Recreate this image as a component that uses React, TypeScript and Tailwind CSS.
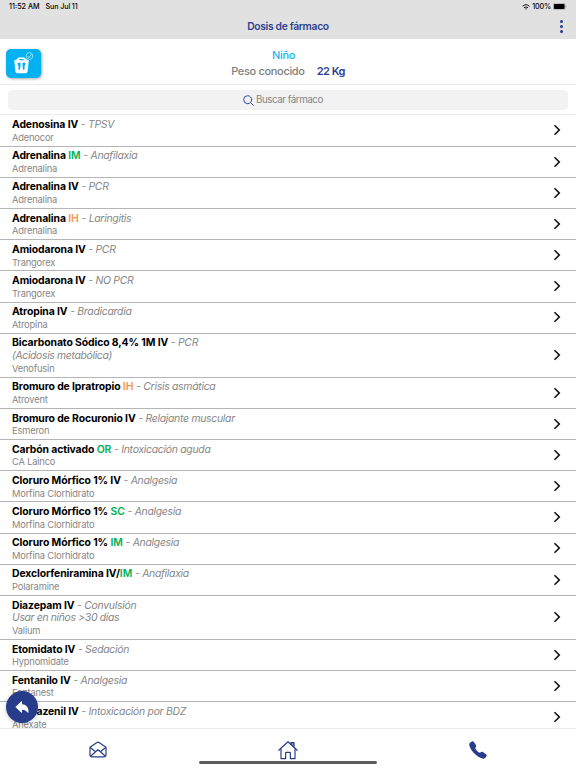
import type { ReactNode } from 'react';
import clsx from 'clsx';
import { IoArrowUndo, IoCall } from 'react-icons/io5';

type Route = 'IM' | 'IH' | 'OR' | 'SC';

interface Drug {
  name: string;
  route?: Route;
  use: string;
  note?: string;
  brand: string;
}

const DRUGS: Drug[] = [
  { name: 'Adenosina IV', use: 'TPSV', brand: 'Adenocor' },
  { name: 'Adrenalina ', route: 'IM', use: 'Anafilaxia', brand: 'Adrenalina' },
  { name: 'Adrenalina IV', use: 'PCR', brand: 'Adrenalina' },
  { name: 'Adrenalina ', route: 'IH', use: 'Laringitis', brand: 'Adrenalina' },
  { name: 'Amiodarona IV', use: 'PCR', brand: 'Trangorex' },
  { name: 'Amiodarona IV', use: 'NO PCR', brand: 'Trangorex' },
  { name: 'Atropina IV', use: 'Bradicardia', brand: 'Atropina' },
  { name: 'Bicarbonato Sódico 8,4% 1M IV', use: 'PCR', note: '(Acidosis metabólica)', brand: 'Venofusin' },
  { name: 'Bromuro de Ipratropio ', route: 'IH', use: 'Crisis asmática', brand: 'Atrovent' },
  { name: 'Bromuro de Rocuronio IV', use: 'Relajante muscular', brand: 'Esmeron' },
  { name: 'Carbón activado ', route: 'OR', use: 'Intoxicación aguda', brand: 'CA Lainco' },
  { name: 'Cloruro Mórfico 1% IV', use: 'Analgesia', brand: 'Morfina Clorhidrato' },
  { name: 'Cloruro Mórfico 1% ', route: 'SC', use: 'Analgesia', brand: 'Morfina Clorhidrato' },
  { name: 'Cloruro Mórfico 1% ', route: 'IM', use: 'Analgesia', brand: 'Morfina Clorhidrato' },
  { name: 'Dexclorfeniramina IV/', route: 'IM', use: 'Anafilaxia', brand: 'Polaramine' },
  { name: 'Diazepam IV', use: 'Convulsión', note: 'Usar en niños >30 días', brand: 'Valium' },
  { name: 'Etomidato IV', use: 'Sedación', brand: 'Hypnomidate' },
  { name: 'Fentanilo IV', use: 'Analgesia', brand: 'Fentanest' },
  { name: 'Flumazenil IV', use: 'Intoxicación por BDZ', brand: 'Anexate' },
];

export default function App() {
  return (
    <div className="relative flex h-[768px] w-[576px] flex-col overflow-hidden bg-white font-['Inter','Liberation_Sans',sans-serif] text-black">
      <Header />
      <PatientBar />
      <SearchBar />
      <ul className="min-h-0 flex-1 pt-[0.6px]">
        {DRUGS.map((drug) => (
          <DrugRow key={`${drug.name}${drug.route}${drug.use}`} drug={drug} />
        ))}
      </ul>
      <TabBar />

      {/* Floating back button */}
      <button
        aria-label="Volver"
        className="absolute top-[691px] left-[6px] flex size-8 items-center justify-center rounded-full bg-[#273c8b] text-white shadow-[0_1px_5px_rgba(0,0,0,0.2)]"
      >
        <IoArrowUndo className="size-[16px]" />
      </button>
    </div>
  );
}

function Header() {
  return (
    <header className="h-[39px] shrink-0 bg-[#e1e1e1]">
      <div className="flex h-[14px] items-center justify-between pr-[9px] pl-[9px] text-[7.2px] font-medium">
        <div className="flex gap-[6px]">
          <span>11:52 AM</span>
          <span className="tracking-[-0.02em]">Sun Jul 11</span>
        </div>
        <div className="flex items-center">
          <WifiIcon />
          <span className="mr-[2px] ml-[2px] tracking-[-0.02em]">100%</span>
          <BatteryIcon />
        </div>
      </div>
      <div className="grid h-[25px] grid-cols-[1fr_auto_1fr] items-center">
        <span />
        <h1 className="text-[10.3px] font-semibold tracking-[-0.032em] text-[#2f4190]">Dosis de fármaco</h1>
        <button aria-label="Menú" className="mr-[13px] flex flex-col gap-[2px] justify-self-end">
          <i className="size-[3px] rounded-full bg-[#273c8b]" />
          <i className="size-[3px] rounded-full bg-[#273c8b]" />
          <i className="size-[3px] rounded-full bg-[#273c8b]" />
        </button>
      </div>
    </header>
  );
}

function PatientBar() {
  return (
    <section className="grid h-[46px] shrink-0 grid-cols-[1fr_auto_1fr] border-b border-[#e9e9e9]">
      <div className="mt-[10px] ml-[6.3px] h-[28.5px] w-[34.3px] rounded-[5px] bg-[#02b1f0] shadow-[1px_1px_3px_rgba(0,0,0,0.35)]">
        <ScaleIcon />
      </div>
      <div className="pt-[8px] text-center text-[11px] leading-[16px] tracking-[-0.03em]">
        <p className="-ml-[9px] font-medium text-[#1ab5f1]">Niño</p>
        <p className="flex gap-[12px] font-medium text-[#808080]">
          <span>Peso conocido</span>
          <span className="font-semibold tracking-[-0.045em] text-[#2f4190]">22 Kg</span>
        </p>
      </div>
    </section>
  );
}

function SearchBar() {
  return (
    <div className="h-[30px] shrink-0 border-b border-[#ececec] px-[8px] pt-[5px]">
      <div className="flex h-5 items-center justify-center gap-[2px] rounded-[4px] bg-[#f2f2f2] pr-[10px] text-[9.8px] tracking-[-0.048em] text-[#858585]">
        <svg viewBox="0 0 11 11" className="size-[11px]" fill="none" stroke="#3a4d9c" strokeLinecap="round">
          <circle cx="4.7" cy="4.7" r="4" />
          <path d="M7.7 7.7 10.3 10.3" />
        </svg>
        <span>Buscar fármaco</span>
      </div>
    </div>
  );
}

function DrugRow({ drug }: { drug: Drug }) {
  const { name, route, use, note, brand } = drug;
  return (
    <li
      className={clsx(
        'flex items-center justify-between border-b border-[#b5b5b5] pr-[15px] pl-[12px]',
        note ? 'h-[44.1px]' : 'h-[31.17px]',
      )}
    >
      <div className="pt-[1.2px] leading-[12.8px] whitespace-pre">
        <p className="text-[10.4px]">
          <b className="font-bold tracking-[-0.01em]">{name}</b>
          {route && <RouteTag route={route}>{route}</RouteTag>}
          <i className="tracking-[-0.026em] text-[#868686]"> - {use}</i>
        </p>
        {note && <p className="text-[10.4px] tracking-[-0.032em] text-[#868686] italic">{note}</p>}
        <p className="text-[9.3px] leading-[11.4px] tracking-[-0.018em] text-[#868686]">{brand}</p>
      </div>
      <svg viewBox="0 0 8 12" className="-mt-[0.6px] h-3 w-2" fill="none" stroke="#111" strokeWidth="1.6">
        <path d="M1.5 1.2 6.3 6 1.5 10.8" />
      </svg>
    </li>
  );
}

function RouteTag({ route, children }: { route: Route; children: ReactNode }) {
  return (
    <span className={clsx('font-semibold', route === 'IH' ? 'text-[#f79646]' : 'text-[#00b050]')}>
      {children}
    </span>
  );
}

function TabBar() {
  return (
    <nav className="relative grid h-10 shrink-0 grid-cols-[195px_1fr_195px] border-t border-[#ececec] bg-white pt-[12px] text-[#273c8b]">
      <svg viewBox="0 0 18 17" className="h-[17px] w-[18px] justify-self-center" fill="none" stroke="currentColor" strokeWidth="1.2" strokeLinejoin="round">
        <path d="M1 6.2 8 1.4Q9 .8 10 1.4L17 6.2V14Q17 15.8 15.2 15.8H2.8Q1 15.8 1 14Z" />
        <path d="M1.2 6.5 6.6 10.8 9 8.8 11.4 10.8 16.8 6.5M1.8 15 6.6 10.8M16.2 15 11.4 10.8" />
      </svg>
      <svg viewBox="0 0 20 19" className="h-[19px] w-[20px] justify-self-center" fill="none" stroke="currentColor" strokeWidth="1.2" strokeLinejoin="round" strokeLinecap="round">
        <path d="M.8 9.2 10 .8 19.2 9.2" />
        <path d="M3 8V17.6H7.6V12Q7.6 11.3 8.3 11.3H11.7Q12.4 11.3 12.4 12V17.6H17V8" />
        <path d="M13 3.2V1.6H16V6" fill="currentColor" fillOpacity=".5" />
      </svg>
      <IoCall className="-mt-px mr-[2px] size-[20px] justify-self-center" />
      <div className="absolute top-[32px] left-[199px] h-[3px] w-[178px] rounded-full bg-[#5c5c5c]" />
    </nav>
  );
}

function WifiIcon() {
  return (
    <svg viewBox="0 0 8 6" className="h-[6px] w-2" fill="none" stroke="#111">
      <path d="M.6 2.3Q4-.9 7.4 2.3M2 3.8Q4 2 6 3.8" />
      <path d="M3.1 4.7 4 5.7 4.9 4.7Q4 4 3.1 4.7" fill="#111" stroke="none" />
    </svg>
  );
}

function BatteryIcon() {
  return (
    <svg viewBox="0 0 15 7" className="h-[7px] w-[14px]" preserveAspectRatio="none">
      <rect x=".3" y=".3" width="12.8" height="6.4" rx="1.8" fill="none" stroke="#8a8a8a" strokeWidth=".6" />
      <rect x="1" y="1" width="11.4" height="5" rx="1.1" />
      <path d="M13.8 2.5Q14.8 3.5 13.8 4.5Z" fill="#8a8a8a" />
    </svg>
  );
}

// Baby scale with footprints and a small check badge
function ScaleIcon() {
  return (
    <svg viewBox="0 0 34.5 28.5" className="h-full w-full">
      <path d="M10.7 11 12.5 8.9H18.5L20.5 11Z" fill="#fff" stroke="#fff" strokeLinejoin="round" />
      <path d="M8.6 11.3H22.6L21.4 22.5Q21.3 24 19.8 24H11.4Q9.9 24 9.8 22.5Z" fill="#fff" stroke="#fff" strokeWidth=".6" strokeLinejoin="round" />
      <rect x="13.4" y="9.9" width="4.3" height="1.4" rx=".5" fill="#02b1f0" />
      <g fill="#02b1f0">
        <path d="M11.4 14.6Q12.8 12.8 14.7 14.2L14.6 17.2 13.9 20.8Q12.4 21.4 12.4 19.5L12.7 17.5Z" />
        <path d="M19.8 14.6Q18.4 12.8 16.5 14.2L16.6 17.2 17.3 20.8Q18.8 21.4 18.8 19.5L18.5 17.5Z" />
      </g>
      <circle cx="23.6" cy="7" r="3.4" fill="none" stroke="#b5e8fb" strokeWidth=".8" />
      <path d="M21.9 7.3 23.1 8.5 25.7 5.4" fill="none" stroke="#d9f4fd" strokeWidth=".8" />
    </svg>
  );
}
